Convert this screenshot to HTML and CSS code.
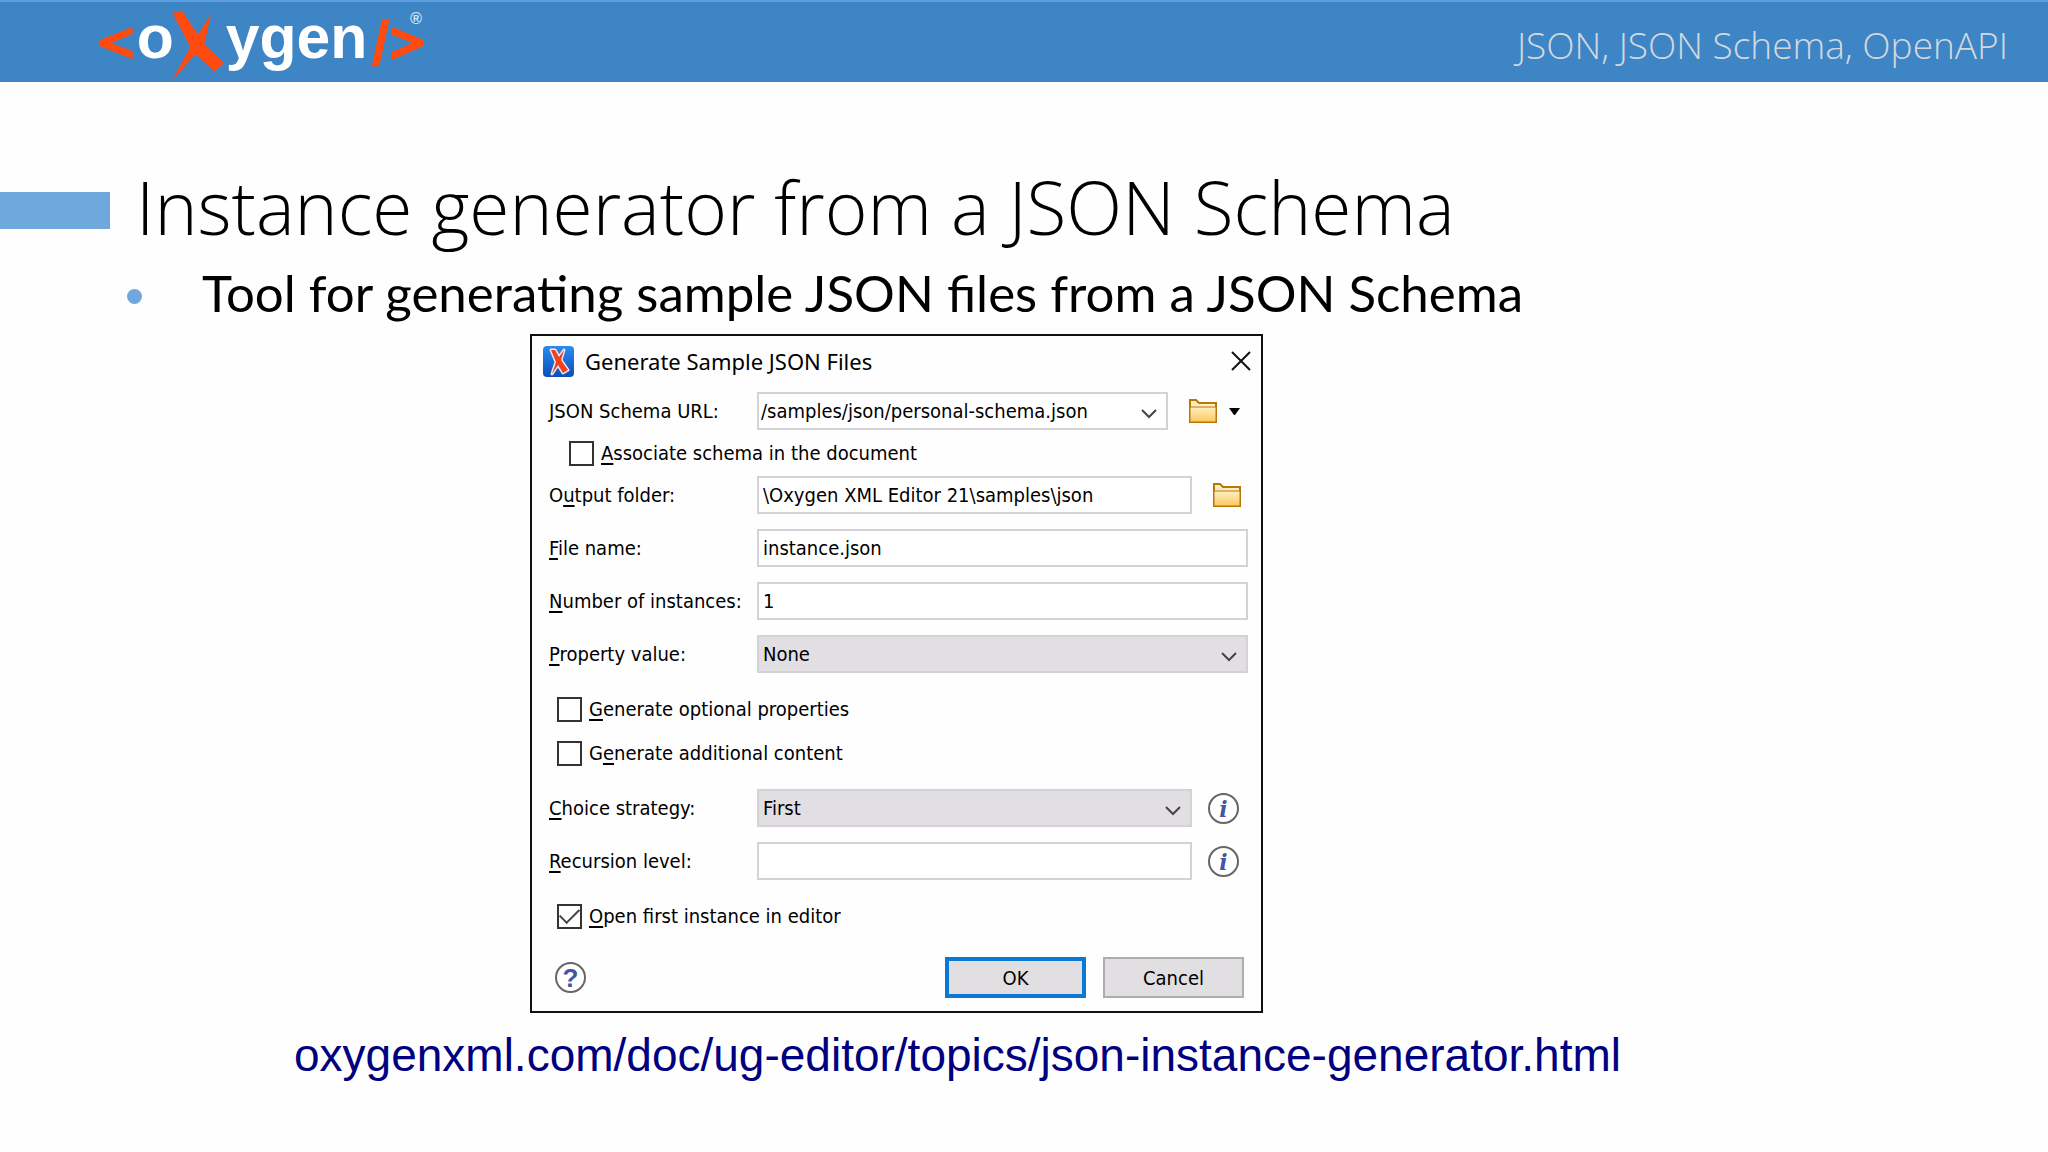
FILE: index.html
```html
<!DOCTYPE html>
<html lang="en">
<head>
  <meta charset="UTF-8" />
  <meta name="viewport" content="width=device-width, initial-scale=1.0" />
  <title>Instance generator from a JSON Schema</title>
  <link rel="stylesheet" href="styles.css">
</head>
<body>
  <header class="topbar">
    <svg class="logo" viewBox="0 0 1140 246" role="img" aria-label="oXygen">
      <g fill="#ff4a10">
        <path d="M158 78V99L94 126L158 151V175L60 136V117Z" />
        <path d="M277 35L307 31L354 101L393 38L373 130L432 187L403 212L347 159L275 241L331 138Z" />
        <path d="M906 55L929 53L898 194L875 197Z" />
        <path d="M936 77L1032 118V134L936 177V153L997 126L936 101Z" />
      </g>
      <g class="logo-text">
        <text x="170" y="172">o</text>
        <text x="437" y="172">ygen</text>
        <text class="logo-mark" x="990" y="69">®</text>
      </g>
    </svg>
    <p class="topic">JSON, JSON Schema, OpenAPI</p>
  </header>

  <main class="slide">
    <div class="heading">
      <h1>Instance generator from a JSON Schema</h1>
    </div>

    <ul class="points">
      <li>Tool for generating sample JSON files from a JSON Schema</li>
    </ul>

    <div class="figure">
      <form class="dialog" aria-label="Generate Sample JSON Files">
        <div class="dialog-title">
          <svg class="app-icon" viewBox="0 0 31 31" aria-hidden="true">
            <defs>
              <linearGradient id="app-blue" x1="0" y1="0" x2="0" y2="1">
                <stop offset="0" stop-color="#2a8cf0" />
                <stop offset="1" stop-color="#0a4fb8" />
              </linearGradient>
            </defs>
            <rect width="31" height="31" rx="4" fill="url(#app-blue)" />
            <path d="M8 4L12 4L16 11L21 4L18 14L25 24L20 27L15 19L9 28L13 16Z" fill="#f04020" stroke="#f4e4ea" stroke-width="3" stroke-linejoin="round" paint-order="stroke" />
          </svg>
          <h2>Generate Sample JSON Files</h2>
          <button class="icon-button close" type="button" aria-label="Close">
            <svg width="20" height="20" viewBox="0 0 20 20"><path d="M1 1L19 19M19 1L1 19" fill="none" stroke="#111" stroke-width="2" /></svg>
          </button>
        </div>

        <div class="row">
          <label for="schema-url">JSON Schema URL:</label>
          <div class="select">
            <select class="plain" id="schema-url"><option>/samples/json/personal-schema.json</option></select>
            <svg class="chevron" viewBox="0 0 16 10"><path d="M1 1L8 8L15 1" /></svg>
          </div>
          <div class="tools tools-wide">
            <button class="icon-button" type="button" aria-label="Browse for schema">
              <svg class="folder" viewBox="0 0 28 24">
                <defs>
                  <linearGradient id="folder-fill" x1="0" y1="0" x2="0" y2="1">
                    <stop offset="0" stop-color="#fff0c0" />
                    <stop offset="1" stop-color="#fcc860" />
                  </linearGradient>
                </defs>
                <path d="M1 23V1H7L10 4H27V23Z" fill="#ffeebb" stroke="#b8770c" stroke-width="2" />
                <path d="M1 8H27V23H1Z" fill="url(#folder-fill)" stroke="#b8770c" stroke-width="1" />
              </svg>
            </button>
            <button class="icon-button" type="button" aria-label="More browse options">
              <svg width="11" height="7" viewBox="0 0 11 7"><path d="M0 0H11L6 7H5Z" /></svg>
            </button>
          </div>
        </div>

        <div class="check check-nested">
          <input type="checkbox" id="associate">
          <label for="associate"><u>A</u>ssociate schema in the document</label>
        </div>

        <div class="row">
          <label for="output">O<u>u</u>tput folder:</label>
          <input type="text" id="output" value="\Oxygen XML Editor 21\samples\json">
          <div class="tools">
            <button class="icon-button" type="button" aria-label="Browse for output folder">
              <svg class="folder" viewBox="0 0 28 24">
                <path d="M1 23V1H7L10 4H27V23Z" fill="#ffeebb" stroke="#b8770c" stroke-width="2" />
                <path d="M1 8H27V23H1Z" fill="url(#folder-fill)" stroke="#b8770c" stroke-width="1" />
              </svg>
            </button>
          </div>
        </div>

        <div class="row">
          <label for="file-name"><u>F</u>ile name:</label>
          <input type="text" id="file-name" value="instance.json">
        </div>

        <div class="row">
          <label for="count"><u>N</u>umber of instances:</label>
          <input type="text" id="count" value="1">
        </div>

        <div class="row">
          <label for="property"><u>P</u>roperty value:</label>
          <div class="select">
            <select id="property"><option>None</option></select>
            <svg class="chevron" viewBox="0 0 16 10"><path d="M1 1L8 8L15 1" /></svg>
          </div>
        </div>

        <div class="checks">
          <div class="check">
            <input type="checkbox" id="optional">
            <label for="optional"><u>G</u>enerate optional properties</label>
          </div>
          <div class="check">
            <input type="checkbox" id="additional">
            <label for="additional">G<u>e</u>nerate additional content</label>
          </div>
        </div>

        <div class="row">
          <label for="strategy"><u>C</u>hoice strategy:</label>
          <div class="select">
            <select id="strategy"><option>First</option></select>
            <svg class="chevron" viewBox="0 0 16 10"><path d="M1 1L8 8L15 1" /></svg>
          </div>
          <div class="tools">
            <button class="round info" type="button" aria-label="About choice strategy">i</button>
          </div>
        </div>

        <div class="row">
          <label for="recursion"><u>R</u>ecursion level:</label>
          <input type="text" id="recursion">
          <div class="tools">
            <button class="round info" type="button" aria-label="About recursion level">i</button>
          </div>
        </div>

        <div class="checks">
          <div class="check">
            <input type="checkbox" id="open-first" checked>
            <label for="open-first"><u>O</u>pen first instance in editor</label>
          </div>
        </div>

        <div class="dialog-footer">
          <button class="round help" type="button" aria-label="Help">?</button>
          <button class="action default" type="button">OK</button>
          <button class="action" type="button">Cancel</button>
        </div>
      </form>
    </div>

    <p class="source">
      <a href="https://oxygenxml.com/doc/ug-editor/topics/json-instance-generator.html">oxygenxml.com/doc/ug-editor/topics/json-instance-generator.html</a>
    </p>
  </main>
</body>
</html>
```
FILE: styles.css
```css
:root {
  --blue: #3e85c6;
  --accent: #6fa8dc;
  --ink: #000;
  --line: #d4d2d6;
  --field: #e1dfe2;
  --link: #000080;
}

* { box-sizing: border-box; }

body {
  margin: 0;
  background: #fefefe;
  color: var(--ink);
  font-family: Lato, "Open Sans", sans-serif;
}

h1, h2, p, ul { margin: 0; }

.topbar {
  display: flex;
  justify-content: space-between;
  align-items: center;
  height: 82px;
  padding: 0 40px 0 80px;
  border-top: 2px solid #5b9fe0;
  background: var(--blue);
}

.logo {
  width: 380px;
  height: 82px;
}

.logo-text {
  fill: #fff;
  font-family: "Liberation Sans", Arial, sans-serif;
  font-size: 182px;
  font-weight: 700;
}

.logo-mark {
  fill: #cfe2f4;
  font-size: 49px;
}

.topic {
  padding-top: 6px;
  color: #d3d8de;
  font-family: "Open Sans", sans-serif;
  font-size: 37px;
  font-weight: 300;
  line-height: 48px;
}

.heading {
  display: flex;
  align-items: center;
  gap: 26px;
  margin-top: 80px;
}

.heading::before {
  content: "";
  width: 110px;
  height: 37px;
  background: var(--accent);
}

h1 {
  padding-bottom: 6px;
  font-family: "Open Sans", sans-serif;
  font-size: 73px;
  font-weight: 300;
  line-height: 90px;
}

.points {
  padding: 0 0 0 127px;
  list-style: none;
}

.points li {
  display: flex;
  align-items: center;
  gap: 60px;
  padding-bottom: 6px;
  font-size: 51px;
  line-height: 70px;
}

.points li::before {
  content: "";
  width: 15px;
  height: 15px;
  margin-top: 6px;
  border-radius: 50%;
  background: var(--accent);
}

.figure {
  display: flex;
  justify-content: center;
  padding-right: 255px;
}

.dialog {
  width: min(733px, 100%);
  padding: 0 13px 13px 17px;
  border: 2px solid #111;
  font-family: "DejaVu Sans Condensed", "Noto Sans", sans-serif;
  font-size: 20px;
  line-height: 28px;
}

.dialog input,
.dialog select,
.dialog button {
  color: inherit;
  font: inherit;
}

.dialog u {
  text-decoration-thickness: 2px;
  text-underline-offset: 3px;
}

.dialog-title {
  display: flex;
  align-items: center;
  gap: 11px;
  height: 56px;
  margin-left: -6px;
  padding-bottom: 6px;
}

.dialog-title h2 {
  flex: 1;
  font-family: "Noto Sans", sans-serif;
  font-size: 22px;
  font-weight: 400;
}

.app-icon {
  width: 31px;
  height: 31px;
}

.icon-button {
  display: flex;
  padding: 0;
  border: 0;
  background: none;
}

.close { margin-right: -3px; }

.row {
  display: flex;
  align-items: center;
}

.row + .row { margin-top: 15px; }

.row > label {
  flex: 0 0 208px;
  white-space: nowrap;
}

.row > input,
.select {
  flex: 1;
  min-width: 0;
}

.row > input,
.select select {
  width: 100%;
  height: 38px;
  padding: 0 4px;
  border: 2px solid var(--line);
  border-radius: 0;
  background: #fff;
}

.select { position: relative; }

.select select {
  appearance: none;
  background: var(--field);
}

.select select.plain {
  padding: 0 2px;
  background: #fff;
}

.chevron {
  position: absolute;
  right: 11px;
  top: 17px;
  width: 16px;
  height: 10px;
  fill: none;
  stroke: #444;
  stroke-width: 2;
  pointer-events: none;
}

.tools {
  display: flex;
  align-items: center;
  width: 56px;
  padding-left: 16px;
}

.tools .folder { margin-left: 5px; }

.tools-wide {
  gap: 12px;
  width: 80px;
}

.folder {
  width: 28px;
  height: 24px;
}

.checks { margin: 14px 0; }

.check {
  display: flex;
  align-items: center;
  gap: 7px;
  height: 44px;
  padding-left: 8px;
}

.check-nested {
  height: 46px;
  padding-left: 20px;
}

.check input {
  display: grid;
  place-items: center;
  width: 25px;
  height: 25px;
  margin: 0;
  appearance: none;
  border: 2px solid #333;
  background: #fff;
}

.check input:checked::before {
  content: "";
  width: 17px;
  height: 9px;
  margin-top: -6px;
  border: solid #444;
  border-width: 0 0 2px 2px;
  transform: rotate(-45deg);
}

.dialog .round {
  display: grid;
  place-items: center;
  width: 31px;
  height: 31px;
  padding: 0;
  border: 2px solid #666;
  border-radius: 50%;
  background: #fff;
  color: #3f57a6;
  font-weight: 700;
}

.dialog .info {
  font-family: "DejaVu Serif", serif;
  font-size: 22px;
  font-style: italic;
}

.dialog .help {
  margin-right: auto;
  margin-left: 6px;
  font-family: "Liberation Sans", sans-serif;
  font-size: 26px;
}

.dialog-footer {
  display: flex;
  align-items: center;
  gap: 17px;
  margin-top: 19px;
  padding-right: 4px;
}

.action {
  width: 141px;
  height: 41px;
  padding: 0;
  border: 2px solid #adadad;
  background: var(--field);
}

.action.default { border: 4px solid #0a78d4; }

.source {
  padding: 14px 133px 0 0;
  font-family: "Liberation Sans", Arial, sans-serif;
  font-size: 46px;
  line-height: 56px;
  text-align: center;
}

.source a {
  color: var(--link);
  text-decoration: none;
}
```
